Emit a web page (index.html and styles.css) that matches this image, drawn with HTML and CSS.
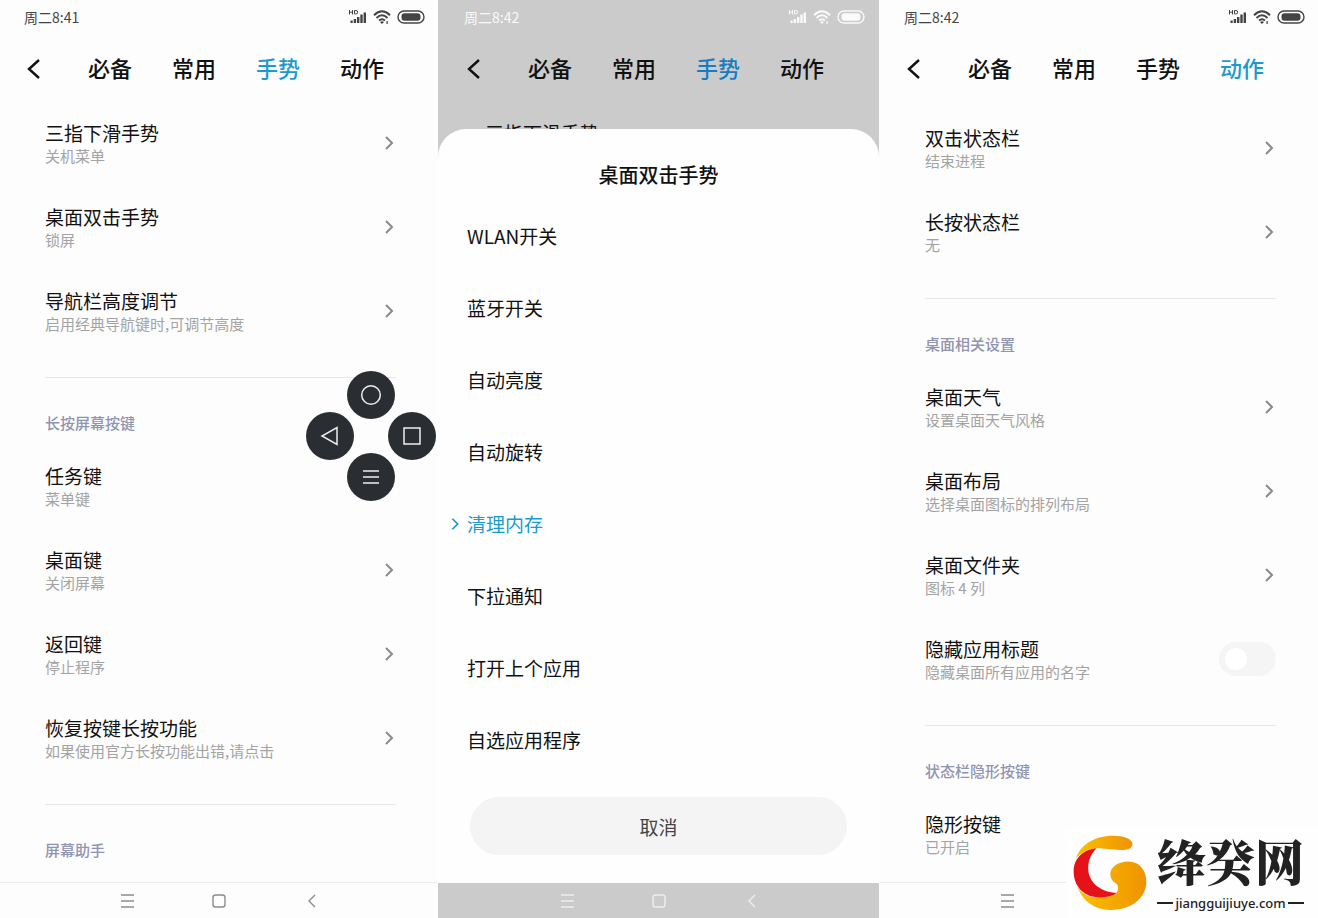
FILE: index.html
```html
<!DOCTYPE html>
<html lang="zh-CN">
<head>
<meta charset="utf-8">
<meta name="viewport" content="width=device-width, initial-scale=1">
<title>手势设置</title>
<link rel="stylesheet" href="styles.css">
</head>
<body>
<svg class="defs" aria-hidden="true">
  <symbol id="signal" viewBox="0 0 19 16">
    <path d="M1.500 1v4.500M4.500 1v4.500M1.500 3.200h3M6.500 1.500h1.500q1.700 0 1.700 1.700t-1.700 1.700h-1.500z" fill="none" stroke="currentColor" stroke-width="1"/>
    <path d="M2.500 11.500h2.200V14H2.500zM5.700 10h2.400v4H5.700zM9 8h2.400v6H9zM12.300 5.500h2.400V14h-2.400zM15.600 3.500H18V14h-2.400z" fill="currentColor"/>
  </symbol>
  <symbol id="wifi" viewBox="0 0 18 16">
    <g fill="none" stroke="currentColor" stroke-width="1.900">
      <path d="M1 6.200Q9-1.500 17 6.200"/><path d="M3.500 9Q9 3.500 14.500 9"/><path d="M6 11.500Q9 8.800 12 11.500"/>
    </g>
    <path d="M7 13q2-1.500 4 0l-2 2zM13.500 12h1.200v3h-1.200z" fill="currentColor"/>
  </symbol>
  <symbol id="battery" viewBox="0 0 28 14">
    <rect x="1" y="1" width="26" height="12" rx="6" fill="none" stroke="currentColor" stroke-width="1.400"/>
    <rect x="4.500" y="3.200" width="19" height="7.600" rx="3" fill="currentColor"/>
  </symbol>
  <symbol id="back" viewBox="0 0 20 24"><path d="M15 3 5 12l10 9" fill="none" stroke="currentColor" stroke-width="2.400"/></symbol>
  <symbol id="chevron" viewBox="0 0 14 16"><path d="M4 2l6 6-6 6" fill="none" stroke="currentColor" stroke-width="2"/></symbol>
  <symbol id="nav-menu" viewBox="0 0 24 24"><path d="M6 6h13M6 12h13M6 18h13" fill="none" stroke="currentColor" stroke-width="1.400"/></symbol>
  <symbol id="nav-home" viewBox="0 0 24 24"><rect x="6" y="6" width="12" height="12" rx="2.500" fill="none" stroke="currentColor" stroke-width="1.400"/></symbol>
  <symbol id="nav-back" viewBox="0 0 24 24"><path d="M16 6l-6 6 6 6" fill="none" stroke="currentColor" stroke-width="1.400"/></symbol>
</svg>

<main class="screens">
  <section class="phone" aria-label="手势">
    <div class="status"><span>周二8:41</span><span class="status-icons"><svg class="signal"><use href="#signal"/></svg><svg class="wifi"><use href="#wifi"/></svg><svg class="battery"><use href="#battery"/></svg></span></div>
    <header class="bar">
      <button class="back" aria-label="返回"><svg><use href="#back"/></svg></button>
      <nav class="tabs"><a href="#">必备</a><a href="#">常用</a><a href="#" class="active">手势</a><a href="#">动作</a></nav>
    </header>
    <div class="content">
      <button class="row"><span class="text"><span class="title">三指下滑手势</span><span class="sub">关机菜单</span></span><svg class="chevron"><use href="#chevron"/></svg></button>
      <button class="row"><span class="text"><span class="title">桌面双击手势</span><span class="sub">锁屏</span></span><svg class="chevron"><use href="#chevron"/></svg></button>
      <button class="row"><span class="text"><span class="title">导航栏高度调节</span><span class="sub">启用经典导航键时,可调节高度</span></span><svg class="chevron"><use href="#chevron"/></svg></button>
      <h2 class="section">长按屏幕按键</h2>
      <button class="row"><span class="text"><span class="title">任务键</span><span class="sub">菜单键</span></span><svg class="chevron"><use href="#chevron"/></svg></button>
      <button class="row"><span class="text"><span class="title">桌面键</span><span class="sub">关闭屏幕</span></span><svg class="chevron"><use href="#chevron"/></svg></button>
      <button class="row"><span class="text"><span class="title">返回键</span><span class="sub">停止程序</span></span><svg class="chevron"><use href="#chevron"/></svg></button>
      <button class="row"><span class="text"><span class="title">恢复按键长按功能</span><span class="sub">如果使用官方长按功能出错,请点击</span></span><svg class="chevron"><use href="#chevron"/></svg></button>
      <h2 class="section">屏幕助手</h2>
    </div>
    <div class="navbar">
      <button aria-label="任务"><svg><use href="#nav-menu"/></svg></button>
      <button aria-label="桌面"><svg><use href="#nav-home"/></svg></button>
      <button aria-label="返回"><svg><use href="#nav-back"/></svg></button>
    </div>
    <div class="pad">
      <button class="pad-top" aria-label="桌面"><svg viewBox="0 0 24 24"><circle cx="12" cy="12" r="9.300"/></svg></button>
      <button class="pad-left" aria-label="返回"><svg viewBox="0 0 24 24"><path d="M19 3.500v17L4 12z"/></svg></button>
      <button class="pad-right" aria-label="任务"><svg viewBox="0 0 24 24"><path d="M4 4h16v16H4z"/></svg></button>
      <button class="pad-bottom" aria-label="菜单"><svg viewBox="0 0 24 24"><path d="M4 6h16M4 12h16M4 18h16"/></svg></button>
    </div>
  </section>

  <section class="phone dimmed" aria-label="桌面双击手势">
    <div class="status"><span>周二8:42</span><span class="status-icons"><svg class="signal"><use href="#signal"/></svg><svg class="wifi"><use href="#wifi"/></svg><svg class="battery"><use href="#battery"/></svg></span></div>
    <header class="bar">
      <button class="back" aria-label="返回"><svg><use href="#back"/></svg></button>
      <nav class="tabs"><a href="#">必备</a><a href="#">常用</a><a href="#" class="active">手势</a><a href="#">动作</a></nav>
    </header>
    <div class="content">
      <button class="row"><span class="text"><span class="title">三指下滑手势</span></span></button>
    </div>
    <div class="navbar">
      <button aria-label="任务"><svg><use href="#nav-menu"/></svg></button>
      <button aria-label="桌面"><svg><use href="#nav-home"/></svg></button>
      <button aria-label="返回"><svg><use href="#nav-back"/></svg></button>
    </div>
    <div class="sheet" role="dialog" aria-labelledby="sheet-title">
      <h2 class="sheet-title" id="sheet-title">桌面双击手势</h2>
      <button class="option">WLAN开关</button>
      <button class="option">蓝牙开关</button>
      <button class="option">自动亮度</button>
      <button class="option">自动旋转</button>
      <button class="option selected"><svg class="marker"><use href="#chevron"/></svg>清理内存</button>
      <button class="option">下拉通知</button>
      <button class="option">打开上个应用</button>
      <button class="option">自选应用程序</button>
      <button class="cancel">取消</button>
    </div>
  </section>

  <section class="phone actions" aria-label="动作">
    <div class="status"><span>周二8:42</span><span class="status-icons"><svg class="signal"><use href="#signal"/></svg><svg class="wifi"><use href="#wifi"/></svg><svg class="battery"><use href="#battery"/></svg></span></div>
    <header class="bar">
      <button class="back" aria-label="返回"><svg><use href="#back"/></svg></button>
      <nav class="tabs"><a href="#">必备</a><a href="#">常用</a><a href="#">手势</a><a href="#" class="active">动作</a></nav>
    </header>
    <div class="content">
      <button class="row"><span class="text"><span class="title">双击状态栏</span><span class="sub">结束进程</span></span><svg class="chevron"><use href="#chevron"/></svg></button>
      <button class="row"><span class="text"><span class="title">长按状态栏</span><span class="sub">无</span></span><svg class="chevron"><use href="#chevron"/></svg></button>
      <h2 class="section">桌面相关设置</h2>
      <button class="row"><span class="text"><span class="title">桌面天气</span><span class="sub">设置桌面天气风格</span></span><svg class="chevron"><use href="#chevron"/></svg></button>
      <button class="row"><span class="text"><span class="title">桌面布局</span><span class="sub">选择桌面图标的排列布局</span></span><svg class="chevron"><use href="#chevron"/></svg></button>
      <button class="row"><span class="text"><span class="title">桌面文件夹</span><span class="sub">图标 4 列</span></span><svg class="chevron"><use href="#chevron"/></svg></button>
      <label class="row" for="hide-title"><span class="text"><span class="title">隐藏应用标题</span><span class="sub">隐藏桌面所有应用的名字</span></span><input class="switch" type="checkbox" id="hide-title"></label>
      <h2 class="section">状态栏隐形按键</h2>
      <button class="row"><span class="text"><span class="title">隐形按键</span><span class="sub">已开启</span></span></button>
    </div>
    <div class="navbar">
      <button aria-label="任务"><svg><use href="#nav-menu"/></svg></button>
      <button aria-label="桌面"><svg><use href="#nav-home"/></svg></button>
      <button aria-label="返回"><svg><use href="#nav-back"/></svg></button>
    </div>
    <div class="brand">
      <svg class="brand-mark" viewBox="67 102 224 230" aria-hidden="true">
        <defs><linearGradient id="gold" x1="0" x2="1"><stop offset="0" stop-color="#fcc000"/><stop offset="1" stop-color="#ee9300"/></linearGradient></defs>
        <path fill="url(#gold)" d="M76 172C90 130 135 104 186 104C222 104 247 114 247 129C247 142 232 148 210 147C180 145 155 141 137 142C110 145 90 158 76 172Z"/>
        <path fill="url(#gold)" d="M80 258C95 282 120 294 150 291C172 290 190 286 199 277C206 266 205 254 196 248C185 241 180 232 180 220C180 198 205 182 235 182C267 182 289 208 289 243C289 292 246 329 180 329C130 328 96 302 80 258Z"/>
        <path fill="#e61219" d="M138 142C104 145 69 168 69 212C69 258 100 292 150 291C174 290 190 286 199 277C155 276 114 248 113 204C112 179 123 157 138 142Z"/>
      </svg>
      <div class="brand-text"><span class="brand-name">绛癸网</span><span class="brand-url">jiangguijiuye.com</span></div>
    </div>
  </section>
</main>
</body>
</html>
```

FILE: styles.css
```css
* { box-sizing: border-box; }
body {
  margin: 0;
  background: #fdfdfd;
  color: #111;
  font-family: "Noto Sans CJK SC", sans-serif;
}
button {
  border: 0;
  padding: 0;
  background: none;
  color: inherit;
  font: inherit;
  text-align: left;
}
svg { display: block; flex: none; }
.defs { position: absolute; width: 0; height: 0; }

.screens {
  display: grid;
  grid-template-columns: repeat(3, 1fr);
  column-gap: 2px;
  height: 100vh;
  min-height: 900px;
}
.phone {
  position: relative;
  display: flex;
  flex-direction: column;
  min-width: 0;
  min-height: 0;
  background: #fdfdfd;
}

/* status bar */
.status {
  display: flex;
  justify-content: space-between;
  align-items: center;
  height: 34px;
  padding: 0 13px 0 24px;
  font-size: 14px;
  line-height: 20px;
  color: #444;
}
.status-icons { display: flex; align-items: center; gap: 6px; }
.signal { width: 19px; height: 16px; }
.wifi { width: 18px; height: 16px; }
.battery { width: 28px; height: 14px; }

/* header tabs */
.bar {
  display: flex;
  align-items: center;
  height: 70px;
  padding-left: 24px;
  flex: none;
}
.back svg { width: 20px; height: 24px; }
.tabs { display: flex; gap: 40px; margin-left: 44px; padding-bottom: 4px; }
.tabs a {
  color: #111;
  font-size: 22px;
  font-weight: 500;
  line-height: 32px;
  text-decoration: none;
}
.tabs .active { color: #1b9ad0; }

/* settings list */
.content { flex: 1; min-height: 0; overflow: hidden; margin-top: -3px; }
.actions .content { margin-top: 2px; }
.row {
  display: flex;
  justify-content: space-between;
  align-items: center;
  width: 100%;
  height: 84px;
  padding: 0 42px 0 45px;
}
.text { display: flex; flex-direction: column; height: 44px; }
.title { font-size: 19px; line-height: 24px; }
.sub { font-size: 15px; line-height: 22px; color: #a3a3a3; }
.chevron { width: 14px; height: 16px; color: #8a8a8a; }
.section {
  margin: 24px 42px 0 45px;
  padding: 34px 0 10px;
  border-top: 1px solid #e8e8e8;
  color: #8f94b0;
  font-size: 15px;
  font-weight: 500;
  line-height: 22px;
}
.switch {
  appearance: none;
  width: 57px;
  height: 34px;
  margin: 0;
  padding: 6px;
  border-radius: 17px;
  background: #f5f5f5;
}
.switch::before {
  content: "";
  display: block;
  width: 22px;
  height: 22px;
  border-radius: 50%;
  background: #fff;
}
.switch:checked { background: #1b9ad0; }
.switch:checked::before { margin-left: auto; }

/* system navigation */
.navbar {
  display: flex;
  justify-content: center;
  align-items: center;
  gap: 68px;
  height: 36px;
  flex: none;
  border-top: 1px solid #ececec;
  color: #8c8c8c;
}
.navbar svg { width: 24px; height: 24px; }

/* floating key pad */
.pad {
  position: absolute;
  top: 374px;
  right: 6px;
  display: grid;
  grid-template: repeat(3, 41px) / repeat(3, 41px);
  place-items: center;
}
.pad button {
  display: grid;
  place-items: center;
  width: 48px;
  height: 48px;
  border-radius: 50%;
  background: #2a2e32;
}
.pad svg {
  width: 24px;
  height: 24px;
  fill: none;
  stroke: #eee;
  stroke-width: 1.5;
}
.pad-top { grid-area: 1 / 2; }
.pad-left { grid-area: 2 / 1; }
.pad-right { grid-area: 2 / 3; }
.pad-bottom { grid-area: 3 / 2; }

/* dimmed screen with bottom sheet */
.dimmed {
  z-index: 1;
  margin: 0 -1px 0 -2px;
  padding: 0 1px 0 2px;
  background: #cbcbcb;
}
.dimmed .status { color: #fafafa; }
.dimmed .tabs .active { color: #167cc4; }
.dimmed .navbar { border-color: #cbcbcb; color: #eee; }
.sheet {
  position: absolute;
  right: 0;
  bottom: 35px;
  left: 0;
  padding-top: 22px;
  border-radius: 28px 28px 0 0;
  background: #fefefe;
}
.sheet-title {
  margin: 0 0 2px;
  font-size: 20px;
  font-weight: 500;
  line-height: 48px;
  text-align: center;
}
.option {
  position: relative;
  display: block;
  width: 100%;
  height: 72px;
  padding: 0 0 2px 29px;
  font-size: 19px;
  line-height: 24px;
}
.selected { color: #1b9ad0; }
.marker {
  position: absolute;
  top: 28px;
  left: 10px;
  width: 14px;
  height: 14px;
}
.cancel {
  display: block;
  width: calc(100% - 64px);
  height: 58px;
  margin: 20px 32px 28px;
  border-radius: 29px;
  background: #f4f4f4;
  color: #444;
  font-size: 19px;
  text-align: center;
}

/* site mark */
.brand {
  position: absolute;
  right: 0;
  bottom: 0;
  display: flex;
  align-items: center;
  gap: 10px;
  height: 91px;
  padding: 0 14px 0 7px;
  background: #fefefe;
}
.brand-mark { width: 74px; height: 76px; }
.brand-text {
  display: flex;
  flex-direction: column;
  gap: 6px;
  width: 147px;
  padding-bottom: 2px;
  color: #222;
}
.brand-name {
  font-family: "Noto Serif CJK SC", "Noto Sans CJK SC", serif;
  font-size: 49px;
  font-weight: 900;
  line-height: 56px;
}
.brand-url {
  display: flex;
  align-items: center;
  gap: 2px;
  font-family: "Noto Sans", sans-serif;
  font-size: 13px;
  font-weight: 500;
  line-height: 18px;
}
.brand-url::before, .brand-url::after { content: ""; flex: 1; height: 2px; background: #222; }
```
